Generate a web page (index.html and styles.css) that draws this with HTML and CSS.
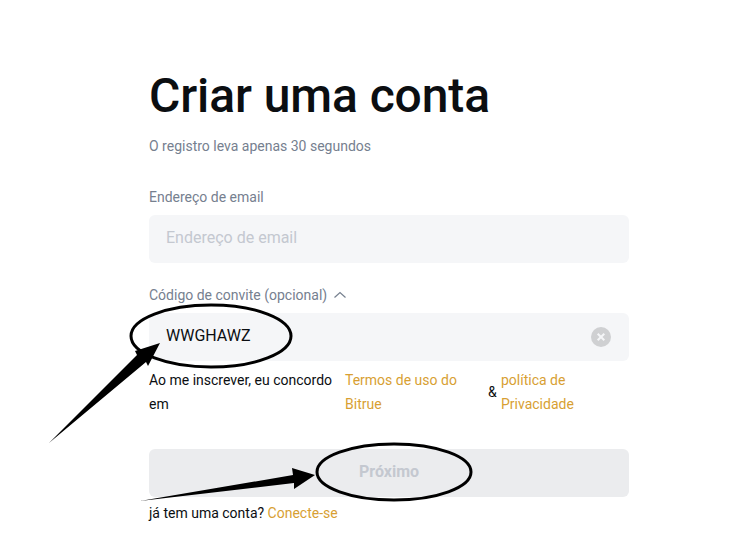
FILE: index.html
```html
<!DOCTYPE html>
<html lang="en">

<head>
    <meta charset="UTF-8">
    <meta name="viewport" content="width=device-width, initial-scale=1.0">
    <title>Criar uma conta</title>
    <link rel="stylesheet" href="styles.css">
</head>

<body>
    <div class="container">
        <h1 class="title">Criar uma conta</h1>
        <p class="subtitle">O registro leva apenas 30 segundos</p>

        <label class="label" for="email">Endereço de email</label>
        <input id="email" class="field" type="text" placeholder="Endereço de email">

        <div class="label label-invite">
            <label for="invite">Código de convite (opcional)</label>
            <svg class="chevron" width="14" height="14" viewBox="0 0 14 14">
                <path d="M1.5 9.5 7 4.5l5.5 5" fill="none" stroke="#76808f" stroke-width="1.2" />
            </svg>
        </div>
        <div class="field-wrap">
            <input id="invite" class="field field-filled" type="text" value="WWGHAWZ">
            <svg class="clear" width="20" height="20" viewBox="0 0 20 20">
                <circle cx="10" cy="10" r="10" fill="#cfd0d2" />
                <path d="M6.7 6.7l6.6 6.6M13.3 6.7l-6.6 6.6" stroke="#f5f6f8" stroke-width="2" />
            </svg>
        </div>

        <div class="terms">
            <span class="terms-text">Ao me inscrever, eu concordo em</span>
            <a class="link terms-use" href="#">Termos de uso do Bitrue</a>
            <span class="terms-and">&amp;</span>
            <a class="link terms-privacy" href="#">política de Privacidade</a>
        </div>

        <button class="button" disabled>Próximo</button>
        <p class="login">já tem uma conta? <a class="link" href="#">Conecte-se</a></p>
    </div>

    <!-- hand drawn marks on top of the screenshot -->
    <svg class="marks" width="734" height="542" viewBox="0 0 734 542">
        <ellipse cx="211" cy="336" rx="80" ry="31" fill="none" stroke="#000" stroke-width="3" />
        <ellipse cx="394" cy="472" rx="77" ry="28" fill="none" stroke="#000" stroke-width="3" />
        <path d="M49 443 137 355 135 351 160 343 148 366 146 362Z" fill="#000" />
        <path d="M140 501 293 475 292 468 315 475 294 489 294 483Z" fill="#000" />
    </svg>
</body>

</html>
```

FILE: styles.css
```css
body {
    font-family: Roboto, "Liberation Sans", sans-serif;
    background-color: #fff;
    margin: 0;
}

.container {
    width: 480px;
    margin-left: 149px;
    padding-top: 64px;
}

.title {
    font-size: 48px;
    font-weight: 500;
    line-height: 64px;
    letter-spacing: -0.1px;
    color: #0b0e11;
    margin: 0;
}

.subtitle {
    font-size: 14px;
    line-height: 20px;
    color: #76808f;
    margin: 8px 0 31px;
}

.label {
    display: block;
    font-size: 14px;
    line-height: 20px;
    color: #76808f;
    margin-bottom: 8px;
}

.label-invite {
    display: flex;
    align-items: center;
    gap: 6px;
    margin-top: 22px;
}

.field {
    display: block;
    width: 100%;
    height: 48px;
    box-sizing: border-box;
    padding: 0 17px 4px;
    border: none;
    border-radius: 6px;
    background-color: #f5f6f8;
    font-family: inherit;
    font-size: 16px;
    color: #0b0e11;
}

.field::placeholder {
    color: #c4c8d0;
    opacity: 1;
}

.field-wrap {
    position: relative;
}

.clear {
    position: absolute;
    top: 14px;
    right: 18px;
}

.terms {
    display: flex;
    align-items: center;
    font-size: 14px;
    line-height: 24px;
    color: #0b0e11;
    margin-top: 7px;
}

.terms-text {
    width: 196px;
}

.terms-use {
    width: 143px;
}

.terms-and {
    width: 13px;
}

.terms-privacy {
    width: 100px;
}

.link {
    color: #d89f33;
    text-decoration: none;
}

.button {
    display: block;
    width: 100%;
    height: 48px;
    margin-top: 33px;
    padding: 0 0 4px;
    border: none;
    border-radius: 6px;
    background-color: #ebecee;
    font-family: inherit;
    font-size: 16px;
    font-weight: 700;
    color: #c4c8d0;
}

.login {
    font-size: 14px;
    line-height: 20px;
    color: #0b0e11;
    margin: 6px 0 0;
}

.marks {
    position: absolute;
    top: 0;
    left: 0;
    pointer-events: none;
}
```
